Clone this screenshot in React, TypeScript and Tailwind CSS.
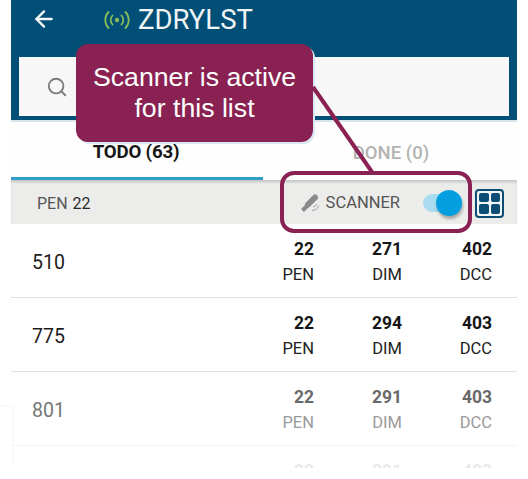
import React from "react";
import { ArrowLeft, Search } from "lucide-react";

const F = { fontFamily: "Roboto, sans-serif" };

const numTone = ["text-[#161616]", "text-[#6a6a6a]", "text-[#e9eae9]"];
const labelTone = ["text-[#222222]", "text-[#9a9a9a]", "text-[#e9eae9]"];
const idTone = ["text-[#1c1c1c]", "text-[#777777]", "text-[#e9eae9]"];

function Stat({ value, label, w, tone }: { value: string; label: string; w: string; tone: number }) {
  return (
    <div className={`flex flex-col items-end ${w}`}>
      <span className={`text-[17.5px] leading-[25px] font-bold ${numTone[tone]}`}>{value}</span>
      {label && <span className={`text-[16.5px] leading-[25px] ${labelTone[tone]}`}>{label}</span>}
    </div>
  );
}

function Row({ id, vals, tone, border, labels = true }: { id: string; vals: string[]; tone: number; border: string; labels?: boolean }) {
  return (
    <div className={`flex h-[74px] items-start border-b pl-[21px] pr-[25px] ${border}`}>
      <div className={`mt-[25px] flex-1 text-[19.5px] leading-[28px] ${idTone[tone]}`}>{id}</div>
      <div className="mt-[13px] flex">
        <Stat value={vals[0]} label={labels ? "PEN" : ""} w="w-[50px]" tone={tone} />
        <Stat value={vals[1]} label={labels ? "DIM" : ""} w="w-[88px]" tone={tone} />
        <Stat value={vals[2]} label={labels ? "DCC" : ""} w="w-[90px]" tone={tone} />
      </div>
    </div>
  );
}

export default function App() {
  return (
    <div className="relative h-[479px] w-[528px] overflow-hidden bg-white" style={F}>
      <div className="ml-[11px] w-[506px]">
        <div className="flex h-[52px] items-center bg-[#014f76] pb-[14px]">
          <ArrowLeft className="ml-[20px] mt-[-1px] h-[26px] w-[26px] text-[#f4f8f9]" strokeWidth={2.2} />
          <svg className="ml-[46px] mt-[1px]" width="28" height="22" viewBox="0 0 28 22" fill="none" stroke="#86bb5a" strokeWidth="1.8" strokeLinecap="round">
            <circle cx="14" cy="11" r="2.2" fill="#86bb5a" stroke="none" />
            <path d="M9.5 6.5a6.5 6.5 0 0 0 0 9" />
            <path d="M18.5 6.5a6.5 6.5 0 0 1 0 9" />
            <path d="M5.5 3a11.5 11.5 0 0 0 0 16" />
            <path d="M22.5 3a11.5 11.5 0 0 1 0 16" />
          </svg>
          <span className="ml-[7px] mt-[2px] text-[27.5px] leading-[32px] text-[#f1f5f6]">ZDRYLST</span>
        </div>
        <div className="h-[70px] border-b-2 border-[#d8e4ea] bg-[#014f76] px-[8px] pt-[5px]">
          <div className="flex h-[59px] items-center bg-[#f6f7f6] pl-[27px]">
            <Search className="h-[22px] w-[22px] text-[#7a7d7b]" strokeWidth={2} />
          </div>
        </div>
        <div className="flex h-[58px] bg-[#fdfefd]">
          <div className="flex w-[252px] items-center justify-center border-b-[3px] border-[#2f9fc9] pr-[2px] pt-[5px] text-[18.7px] font-bold tracking-[-0.2px] text-[#161616]">TODO (63)</div>
          <div className="flex flex-1 items-center justify-center pl-[2px] pt-[6px] text-[18.5px] font-medium text-[#b2b4b2]">DONE (0)</div>
        </div>
        <div className="flex h-[44px] items-center bg-[#ecedeb] pl-[26px] pr-[13px] pt-[2px] shadow-[inset_0_3px_3px_-1px_rgba(0,0,0,0.18)]">
          <span className="mt-[1px] text-[16px] text-[#565656]">PEN</span>
          <span className="ml-[5px] mt-[1px] flex-1 text-[16px] text-[#2a2a2a]">22</span>
          <svg width="20" height="20" viewBox="0 0 20 20" className="mr-[6px]" fill="none">
            <path d="M2.5 17.5L8 12" stroke="#8a8a8a" strokeWidth="4" />
            <path d="M8 11.5L15 4.5" stroke="#8a8a8a" strokeWidth="6" strokeLinecap="round" />
            <path d="M13 14a5 5 0 0 0 4-3M12 17.5a8 8 0 0 0 7-5" stroke="#a0a0a0" strokeWidth="1" />
          </svg>
          <span className="mt-[1px] text-[16.5px] text-[#555555]">SCANNER</span>
          <div className="relative ml-[23px] h-[18px] w-[36px] rounded-full bg-[#a8dcee]">
            <div className="absolute left-[13px] top-[-4px] h-[26px] w-[26px] rounded-full bg-[#049fe0] shadow-[1px_3px_3px_rgba(0,0,0,0.3)]" />
          </div>
          <div className="ml-[16px] grid h-[29px] w-[29px] grid-cols-2 gap-[2px] rounded-[4px] border-2 border-[#0b4d74] bg-[#f2f5f5] p-[2px]">
            <div className="rounded-[2px] bg-[#0b4d74]" />
            <div className="rounded-[2px] bg-[#0b4d74]" />
            <div className="rounded-[2px] bg-[#0b4d74]" />
            <div className="rounded-[2px] bg-[#0b4d74]" />
          </div>
        </div>
        <Row id="510" vals={["22", "271", "402"]} tone={0} border="border-[#dfe0df]" />
        <Row id="775" vals={["22", "294", "403"]} tone={0} border="border-[#dfe0df]" />
        <Row id="801" vals={["22", "291", "403"]} tone={1} border="border-[#f2f3f2]" />
        <div className="h-[22px] overflow-hidden">
          <Row id="" vals={["22", "291", "403"]} tone={2} border="border-transparent" labels={false} />
        </div>
      </div>

      <div className="absolute left-0 top-[405px] h-[60px] w-[14px] rounded-tr-[6px] border-r border-t border-[#f4f5f4]" />
      <div className="absolute left-[76px] top-[44px] flex h-[98px] w-[237px] flex-col items-center justify-center rounded-[12px] bg-[#892252] text-center text-[26.7px] leading-[31px] text-white shadow-[2px_2px_0_#d8e8f4]" style={{ fontFamily: '"Liberation Sans", sans-serif' }}>
        <span>Scanner is active</span>
        <span>for this list</span>
      </div>
      <svg className="pointer-events-none absolute left-[300px] top-[80px]" width="90" height="100" viewBox="0 0 90 100" fill="none">
        <path d="M13 7L72 92" stroke="#892252" strokeWidth="4" />
      </svg>
      <div className="pointer-events-none absolute left-[280px] top-[171px] h-[62px] w-[192px] rounded-[14px] border-[4px] border-[#892252]" />
    </div>
  );
}
